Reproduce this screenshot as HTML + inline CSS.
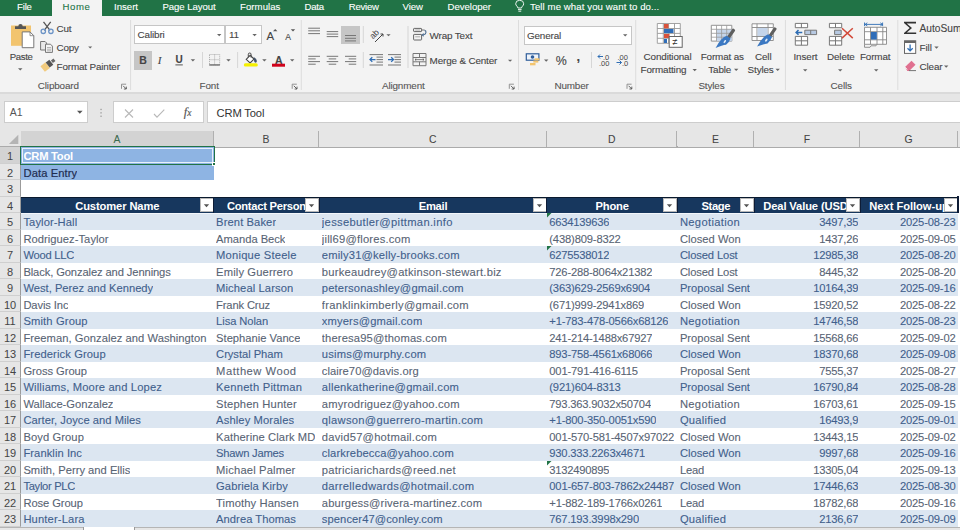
<!DOCTYPE html><html><head><meta charset="utf-8"><style>
*{margin:0;padding:0;box-sizing:border-box}
html,body{width:960px;height:530px;overflow:hidden;background:#fff;font-family:"Liberation Sans",sans-serif}
.a{position:absolute;white-space:nowrap}
#tabs{position:absolute;left:0;top:0;width:960px;height:16px;background:#217346}
.tab{position:absolute;top:0;height:14px;line-height:14px;color:#fff;font-size:9.6px;-webkit-text-stroke:0.1px currentColor}
#rib{position:absolute;left:0;top:16px;width:960px;height:76px;background:#f3f3f3}
#fbar{position:absolute;left:0;top:92px;width:960px;height:39px;background:#e6e6e6;border-top:2px solid #dadada}
.rt{position:absolute;white-space:nowrap;font-size:9.6px;color:#444;-webkit-text-stroke:0.1px currentColor}
.cell{position:absolute;white-space:nowrap;font-size:11.2px;height:16.5px;line-height:19.2px;overflow:hidden}
.rh{position:absolute;left:0;width:21px;height:16.5px;line-height:19px;text-align:center;font-size:11px;color:#444;background:#e6e6e6;border-bottom:1px solid #cfcfcf;border-right:1px solid #9b9b9b}
.ch{position:absolute;top:131.1px;height:16px;line-height:17px;text-align:center;font-size:10.4px;color:#333;background:#e6e6e6;border-right:1px solid #b0b0b0;-webkit-text-stroke:0.05px currentColor}
.fb{position:absolute;width:14px;height:14px;background:#fff;border:1px solid #b8b8b8}
</style></head><body><div id="tabs"><div class="tab" style="left:17px;letter-spacing:-0.18px">File</div><div class="tab" style="left:114px;letter-spacing:-0.002px">Insert</div><div class="tab" style="left:162.5px;letter-spacing:-0.083px">Page Layout</div><div class="tab" style="left:240px;letter-spacing:0.062px">Formulas</div><div class="tab" style="left:304.5px;letter-spacing:-0.257px">Data</div><div class="tab" style="left:348.75px;letter-spacing:-0.246px">Review</div><div class="tab" style="left:402.5px;letter-spacing:-0.077px">View</div><div class="tab" style="left:447.5px;letter-spacing:-0.029px">Developer</div><div class="tab" style="left:530px;letter-spacing:0.099px">Tell me what you want to do...</div><div class="tab" style="left:52px;top:0;width:50px;height:16px;background:#f3f3f3"></div><div class="tab" style="left:62.5px;color:#217346;letter-spacing:0.598px">Home</div><svg class="a" style="left:515px;top:0" width="10" height="13" viewBox="0 0 10 13"><path d="M2.9 8c0-1.6-2.2-2.2-2.2-4.2a4 3.5 0 0 1 8 0c0 2-2.2 2.6-2.2 4.2z M3 9.6h3.6 M3.4 11.2h2.8" fill="none" stroke="#e8f2ec" stroke-width="1"/></svg></div><div id="rib"></div><div class="rt" style="left:9.7px;top:49.9px;height:14px;line-height:14px;font-size:9.9px;letter-spacing:-0.153px;color:#444;letter-spacing:-0.35px;font-size:9.6px">Paste</div><div class="rt" style="left:56.5px;top:22.2px;height:14px;line-height:14px;font-size:9.9px;letter-spacing:-0.156px;color:#444;">Cut</div><div class="rt" style="left:56.5px;top:41.3px;height:14px;line-height:14px;font-size:9.9px;letter-spacing:-0.175px;color:#444;">Copy</div><div class="rt" style="left:56.5px;top:59.8px;height:14px;line-height:14px;font-size:9.9px;letter-spacing:-0.142px;color:#444;">Format Painter</div><div class="rt" style="left:37.8px;top:78.8px;height:14px;line-height:14px;font-size:9.9px;letter-spacing:-0.143px;color:#555;">Clipboard</div><div class="rt" style="left:199.6px;top:78.8px;height:14px;line-height:14px;font-size:9.9px;letter-spacing:-0.15px;color:#555;">Font</div><div class="rt" style="left:382px;top:78.8px;height:14px;line-height:14px;font-size:9.9px;letter-spacing:-0.148px;color:#555;">Alignment</div><div class="rt" style="left:554.5px;top:78.8px;height:14px;line-height:14px;font-size:9.9px;letter-spacing:-0.178px;color:#555;">Number</div><div class="rt" style="left:698.4px;top:78.8px;height:14px;line-height:14px;font-size:9.9px;letter-spacing:-0.136px;color:#555;">Styles</div><div class="rt" style="left:830.6px;top:78.8px;height:14px;line-height:14px;font-size:9.9px;letter-spacing:-0.133px;color:#555;">Cells</div><div class="rt" style="left:429.6px;top:28.500000000000004px;height:14px;line-height:14px;font-size:9.9px;letter-spacing:-0.154px;color:#444;">Wrap Text</div><div class="rt" style="left:429.6px;top:53.8px;height:14px;line-height:14px;font-size:9.9px;letter-spacing:-0.151px;color:#444;">Merge &amp; Center</div><div class="rt" style="left:643.6px;top:49.9px;height:14px;line-height:14px;font-size:9.9px;letter-spacing:-0.136px;color:#444;">Conditional</div><div class="rt" style="left:640.6px;top:63.099999999999994px;height:14px;line-height:14px;font-size:9.9px;letter-spacing:-0.143px;color:#444;">Formatting</div><div class="rt" style="left:700.7px;top:50.099999999999994px;height:14px;line-height:14px;font-size:9.9px;letter-spacing:-0.15px;color:#444;">Format as</div><div class="rt" style="left:708.3px;top:62.7px;height:14px;line-height:14px;font-size:9.9px;letter-spacing:-0.15px;color:#444;">Table</div><div class="rt" style="left:755px;top:50.099999999999994px;height:14px;line-height:14px;font-size:9.9px;letter-spacing:-0.129px;color:#444;">Cell</div><div class="rt" style="left:747.6px;top:62.7px;height:14px;line-height:14px;font-size:9.9px;letter-spacing:-0.136px;color:#444;">Styles</div><div class="rt" style="left:793.5px;top:50.099999999999994px;height:14px;line-height:14px;font-size:9.9px;letter-spacing:-0.125px;color:#444;">Insert</div><div class="rt" style="left:827px;top:50.099999999999994px;height:14px;line-height:14px;font-size:9.9px;letter-spacing:-0.145px;color:#444;">Delete</div><div class="rt" style="left:860px;top:50.099999999999994px;height:14px;line-height:14px;font-size:9.9px;letter-spacing:-0.158px;color:#444;">Format</div><div class="rt" style="left:919.5px;top:21.7px;height:14px;line-height:14px;font-size:10.2px;color:#444;">AutoSum</div><div class="rt" style="left:919.5px;top:41.199999999999996px;height:14px;line-height:14px;font-size:9.9px;letter-spacing:-0.096px;color:#444;">Fill</div><div class="rt" style="left:919.5px;top:60.3px;height:14px;line-height:14px;font-size:9.9px;letter-spacing:-0.143px;color:#444;">Clear</div><div class="a" style="left:134.4px;top:25.4px;width:91px;height:19px;background:#fff;border:1px solid #c6c6c6"></div><div class="a" style="left:224.5px;top:25.4px;width:37px;height:19px;background:#fff;border:1px solid #c6c6c6"></div><div class="rt" style="left:137.5px;top:28.3px;height:14px;line-height:14px;font-size:9.9px;letter-spacing:-0.121px;color:#444;">Calibri</div><div class="rt" style="left:229px;top:28.3px;height:14px;line-height:14px;font-size:9.9px;letter-spacing:-0.167px;color:#444;">11</div><div class="a" style="left:523.5px;top:25.5px;width:108px;height:19px;background:#fff;border:1px solid #c6c6c6"></div><div class="rt" style="left:527px;top:28.500000000000004px;height:14px;line-height:14px;font-size:9.9px;letter-spacing:-0.152px;color:#444;">General</div><div class="a" style="left:134px;top:51.2px;width:18px;height:18.6px;background:#c6c6c6"></div><div class="a" style="left:341.4px;top:26px;width:18.6px;height:18px;background:#c6c6c6"></div><div class="rt" style="left:139.2px;top:53.0px;height:14px;line-height:14px;font-size:10.5px;color:#444;font-weight:bold">B</div><div class="rt" style="left:157.8px;top:53.0px;height:14px;line-height:14px;font-size:11px;color:#444;font-style:italic;font-family:'Liberation Serif',serif">I</div><div class="rt" style="left:175.6px;top:52.6px;height:14px;line-height:14px;font-size:10px;color:#444;font-weight:bold">U</div><div class="rt" style="left:266.4px;top:28.799999999999997px;height:14px;line-height:14px;font-size:11.4px;color:#444;">A</div><div class="rt" style="left:285.3px;top:29.6px;height:14px;line-height:14px;font-size:8.6px;color:#444;">A</div><div class="rt" style="left:275px;top:52.8px;height:14px;line-height:14px;font-size:10.5px;color:#444;font-weight:bold">A</div><div class="rt" style="left:555.8px;top:53.6px;height:14px;line-height:14px;font-size:12.4px;color:#444;">%</div><div class="rt" style="left:576.6px;top:49.8px;height:14px;line-height:14px;font-size:13px;color:#444;font-weight:bold">,</div><svg class="a" style="left:0;top:0" width="960" height="92" viewBox="0 0 960 92"><rect x="130.1" y="20" width="1" height="70" fill="#dcdcdc"/><rect x="300.8" y="20" width="1" height="70" fill="#dcdcdc"/><rect x="518.0" y="20" width="1" height="70" fill="#dcdcdc"/><rect x="635.2" y="20" width="1" height="70" fill="#dcdcdc"/><rect x="784.9" y="20" width="1" height="70" fill="#dcdcdc"/><rect x="897.3" y="20" width="1" height="70" fill="#dcdcdc"/><rect x="202.0" y="52" width="1" height="16" fill="#d6d6d6"/><rect x="237.1" y="52" width="1" height="16" fill="#d6d6d6"/><rect x="362.8" y="26" width="1" height="17" fill="#d6d6d6"/><rect x="362.8" y="52" width="1" height="16" fill="#d6d6d6"/><rect x="407.5" y="26" width="1" height="42" fill="#d6d6d6"/><rect x="591.0" y="52" width="1" height="16" fill="#d6d6d6"/><path d="M121.5 88.8v-4.6h4.6" fill="none" stroke="#888" stroke-width="0.9"/><path d="M123.1 85.8l3.2 3.2m0-2.4v2.4h-2.4" fill="none" stroke="#555" stroke-width="0.9"/><path d="M292.2 88.8v-4.6h4.6" fill="none" stroke="#888" stroke-width="0.9"/><path d="M293.8 85.8l3.2 3.2m0-2.4v2.4h-2.4" fill="none" stroke="#555" stroke-width="0.9"/><path d="M509.3 88.8v-4.6h4.6" fill="none" stroke="#888" stroke-width="0.9"/><path d="M510.90000000000003 85.8l3.2 3.2m0-2.4v2.4h-2.4" fill="none" stroke="#555" stroke-width="0.9"/><path d="M627 88.8v-4.6h4.6" fill="none" stroke="#888" stroke-width="0.9"/><path d="M628.6 85.8l3.2 3.2m0-2.4v2.4h-2.4" fill="none" stroke="#555" stroke-width="0.9"/><path d="M18 68.3h4.5l-2.25 2.25z" fill="#666"/><path d="M88.2 46.4h4.0l-2.0 2.0z" fill="#666"/><path d="M217 34h4.400000000000006l-2.200000000000003 2.200000000000003z" fill="#666"/><path d="M252.4 34h4.400000000000006l-2.200000000000003 2.200000000000003z" fill="#666"/><path d="M190.7 59.3h4.400000000000006l-2.200000000000003 2.200000000000003z" fill="#666"/><path d="M226.3 59.3h4.399999999999977l-2.1999999999999886 2.1999999999999886z" fill="#666"/><path d="M262.2 59.3h4.400000000000034l-2.200000000000017 2.200000000000017z" fill="#666"/><path d="M290 59.3h4.399999999999977l-2.1999999999999886 2.1999999999999886z" fill="#666"/><path d="M386.4 34.2h4.2000000000000455l-2.1000000000000227 2.1000000000000227z" fill="#666"/><path d="M508 59.7h4.2000000000000455l-2.1000000000000227 2.1000000000000227z" fill="#666"/><path d="M623 34.2h4.399999999999977l-2.1999999999999886 2.1999999999999886z" fill="#666"/><path d="M544 59.5h4.399999999999977l-2.1999999999999886 2.1999999999999886z" fill="#666"/><path d="M692.5 69h4.399999999999977l-2.1999999999999886 2.1999999999999886z" fill="#666"/><path d="M734 68.8h4.399999999999977l-2.1999999999999886 2.1999999999999886z" fill="#666"/><path d="M775.5 68.8h4.399999999999977l-2.1999999999999886 2.1999999999999886z" fill="#666"/><path d="M803 69.3h4.399999999999977l-2.1999999999999886 2.1999999999999886z" fill="#666"/><path d="M838 69.3h4.399999999999977l-2.1999999999999886 2.1999999999999886z" fill="#666"/><path d="M874 69.3h4.399999999999977l-2.1999999999999886 2.1999999999999886z" fill="#666"/><path d="M934.3 46.5h4.400000000000091l-2.2000000000000455 2.2000000000000455z" fill="#666"/><path d="M944 65.6h4.399999999999977l-2.1999999999999886 2.1999999999999886z" fill="#666"/><path d="M273 31.2h4.4l-2.2-2.2z" fill="#555"/><path d="M290.8 29.3h4.4l-2.2 2.2z" fill="#555"/><rect x="175.4" y="64.4" width="7.4" height="1" fill="#555"/><rect x="11" y="25.5" width="20" height="20.3" fill="#f2c46e"/><path d="M15 28.9h11v-2.6h-3.3a2.2 2.2 0 0 0 -4.4 0h-3.3z" fill="#555"/><path d="M22.2 31.9h7.8l3.8 3.8v12h-11.6z" fill="#fff" stroke="#777" stroke-width="1"/><path d="M30 31.9v3.8h3.8" fill="none" stroke="#777" stroke-width="0.8"/><path d="M43.5 21.8l6.5 8.5M50.7 21.8l-6.5 8.5" stroke="#555" stroke-width="1.3" fill="none"/><circle cx="43.3" cy="31.3" r="2.2" fill="none" stroke="#6b93c6" stroke-width="1.3"/><circle cx="50.9" cy="31.3" r="2.2" fill="none" stroke="#6b93c6" stroke-width="1.3"/><path d="M40.6 41.5h4.5l1.5 1.5v7h-6z" fill="#e8e8e8" stroke="#777" stroke-width="1"/><path d="M45.5 44.2h5l1.9 1.9v6.3h-6.9z" fill="#f4f4f4" stroke="#777" stroke-width="1"/><path d="M47 47.5h4M47 49.2h4M47 50.8h4" stroke="#999" stroke-width="0.7"/><g transform="translate(48.3,64.6) rotate(-38)"><rect x="-7.2" y="-3.6" width="6.4" height="7.2" fill="#f2cb7e"/><rect x="-0.8" y="-3.2" width="4.6" height="6.4" fill="#555"/><rect x="4.6" y="-1.6" width="3.2" height="3.2" fill="#666"/></g><path d="M209.5 54.5h10.2v10.5h-10.2z M214.6 54.5v10.5 M209.5 59.7h10.2" fill="none" stroke="#999" stroke-width="0.8" stroke-dasharray="1 1"/><rect x="209.3" y="64.4" width="10.6" height="1.1" fill="#555"/><path d="M246.2 59.3L250.2 55.3L254 59.1L250.1 62.9Z" fill="#fff" stroke="#444" stroke-width="1.1"/><path d="M248.3 56.9v-2.5a1.4 1.4 0 0 1 2.8 0v3.2" fill="none" stroke="#444" stroke-width="1"/><path d="M253.6 57.3q3 0.7 3.3 3.6q0 1.8-1.5 1.8q-1.3-0.2-1.3-1.9z" fill="#44546a"/><rect x="243.8" y="63.3" width="14" height="3.2" rx="1.6" fill="#f5f000"/><rect x="272" y="63.7" width="13" height="3" fill="#d0021b"/><rect x="308.2" y="27.7" width="11.8" height="1.0" fill="#777"/><rect x="308.2" y="30.3" width="11.8" height="1.0" fill="#777"/><rect x="308.2" y="33.1" width="11.8" height="1.0" fill="#777"/><rect x="326.7" y="31.1" width="11.5" height="1.0" fill="#777"/><rect x="326.7" y="33.6" width="11.5" height="1.0" fill="#777"/><rect x="326.7" y="36.1" width="11.5" height="1.0" fill="#777"/><rect x="345" y="35.0" width="11" height="1.0" fill="#777"/><rect x="345" y="37.8" width="11" height="1.0" fill="#777"/><rect x="345" y="40.4" width="11" height="1.0" fill="#777"/><rect x="308.2" y="55.8" width="11.8" height="1.0" fill="#777"/><rect x="308.2" y="58.4" width="7.5" height="1.0" fill="#777"/><rect x="308.2" y="61.1" width="11.8" height="1.0" fill="#777"/><rect x="308.2" y="63.7" width="7.5" height="1.0" fill="#777"/><rect x="326.7" y="55.8" width="11.5" height="1.0" fill="#777"/><rect x="328.7" y="58.4" width="7.5" height="1.0" fill="#777"/><rect x="326.7" y="61.1" width="11.5" height="1.0" fill="#777"/><rect x="328.7" y="63.7" width="7.5" height="1.0" fill="#777"/><rect x="345" y="55.8" width="11.2" height="1.0" fill="#777"/><rect x="348.7" y="58.4" width="7.499999999999999" height="1.0" fill="#777"/><rect x="345" y="61.1" width="11.2" height="1.0" fill="#777"/><rect x="348.7" y="63.7" width="7.499999999999999" height="1.0" fill="#777"/><rect x="369.5" y="54.1" width="13.5" height="1.0" fill="#777"/><rect x="376.5" y="56.6" width="6.5" height="1.0" fill="#777"/><rect x="376.5" y="59.1" width="6.5" height="1.0" fill="#777"/><rect x="376.5" y="61.6" width="6.5" height="1.0" fill="#777"/><rect x="369.5" y="64.5" width="13.5" height="1.0" fill="#777"/><path d="M370 59.6h5.5M372.3 57.3l-2.3 2.3 2.3 2.3" stroke="#2e6db4" stroke-width="1.3" fill="none"/><rect x="388" y="54.1" width="13" height="1.0" fill="#777"/><rect x="394.5" y="56.6" width="6.5" height="1.0" fill="#777"/><rect x="394.5" y="59.1" width="6.5" height="1.0" fill="#777"/><rect x="394.5" y="61.6" width="6.5" height="1.0" fill="#777"/><rect x="388" y="64.5" width="13" height="1.0" fill="#777"/><path d="M388 59.6h5.5M391.2 57.3l2.3 2.3-2.3 2.3" stroke="#2e6db4" stroke-width="1.3" fill="none"/><text x="0" y="0" transform="translate(373,39.5) rotate(-45)" font-family="Liberation Sans" font-size="8.5" fill="#444">ab</text><path d="M375 42l8-8M380.5 34h2.5v2.5" stroke="#444" stroke-width="1" fill="none"/><rect x="413.6" y="28.4" width="8" height="3.2" rx="0.6" fill="#f4f4f4" stroke="#666" stroke-width="1"/><rect x="413.6" y="34.4" width="8" height="5.6" rx="0.6" fill="#f4f4f4" stroke="#666" stroke-width="1"/><path d="M415.2 30h5M415.2 36.8h5" stroke="#999" stroke-width="0.8"/><path d="M421.6 30h3" stroke="#777" stroke-width="1"/><path d="M424.6 30.4c2.2 0.6 1.8 3.6 -1.2 4.4" stroke="#4a6a8e" stroke-width="1.1" fill="none"/><path d="M421.3 35.1l2.4-2v3.6z" fill="#4a6a8e"/><path d="M413 53.5h13v12.2h-13z M413 57.5h13 M413 61.8h13 M419.5 53.5v4 M419.5 61.8v3.9" fill="none" stroke="#777" stroke-width="1"/><path d="M415 59.6h9M416.3 58.4l-1.3 1.2 1.3 1.2M422.7 58.4l1.3 1.2-1.3 1.2" stroke="#555" stroke-width="0.7" fill="none"/><rect x="526.3" y="53.8" width="12.6" height="6.4" fill="#eef3fa" stroke="#2e5d9a" stroke-width="1.2"/><circle cx="532.5" cy="57" r="1.8" fill="#2e5d9a"/><rect x="534.5" y="58.3" width="5" height="2" fill="#f2c46e"/><rect x="533.3" y="60.6" width="5" height="2" fill="#f2c46e"/><rect x="530" y="63" width="5.5" height="2.3" fill="#f2c46e"/><text x="603" y="59.5" font-family="Liberation Sans" font-size="7.5" fill="#444">.0</text><text x="599" y="65.5" font-family="Liberation Sans" font-size="7.5" fill="#444">.00</text><path d="M598 56.5h5M600 54.5l-2 2 2 2" stroke="#2e6db4" stroke-width="1" fill="none"/><text x="617.5" y="59.5" font-family="Liberation Sans" font-size="7.5" fill="#444">.00</text><text x="622" y="65.5" font-family="Liberation Sans" font-size="7.5" fill="#444">.0</text><path d="M616.5 62.5h5M619.5 60.5l2 2-2 2" stroke="#2e6db4" stroke-width="1" fill="none"/><path d="M657.3 23.5h23v19.8h-23z M657.3 28.5h23 M657.3 33.4h23 M657.3 38.3h23 M663.3 23.5v19.8 M668.6 23.5v19.8 M674.5 23.5v19.8" fill="#fff" stroke="#999" stroke-width="0.9"/><rect x="664" y="24" width="4.5" height="4.3" fill="#d9523a"/><rect x="664" y="29" width="9.5" height="4" fill="#2f6db8"/><rect x="664" y="34" width="5.5" height="4" fill="#d9523a"/><rect x="664" y="39" width="3" height="4" fill="#2f6db8"/><rect x="669.2" y="36.5" width="13" height="10.8" fill="#fff" stroke="#666" stroke-width="1"/><text x="672.2" y="45.3" font-family="Liberation Sans" font-size="9.5" fill="#333">≠</text><path d="M711.3 25.3h20.5v15.8h-20.5z" fill="#fff" stroke="#888" stroke-width="0.9"/><rect x="716.5" y="29.3" width="15.3" height="11.8" fill="#c5d5ea"/><path d="M711.3 29.3h20.5 M711.3 33.3h20.5 M711.3 37.2h20.5 M716.5 25.3v15.8 M721.6 25.3v15.8 M726.7 25.3v15.8" fill="none" stroke="#999" stroke-width="0.8"/><g transform="translate(727.6,38.6) rotate(-55)"><rect x="1" y="-1.6" width="10.5" height="3.2" rx="1" fill="#5f5f5f"/><path d="M1.8 2.4V-2.4Q-3.5 -6-14.5 -4.5Q-8.5 -0.5 -6 2.3Q-2 3.6 1.8 2.4z" fill="#3b78c2"/><ellipse cx="-4" cy="-0.6" rx="1.8" ry="0.9" fill="#dfeaf6"/></g><path d="M752 23.8h21.3v16.7h-21.3z M752 27.5h21.3 M752 36.5h21.3 M757 23.8v16.7 M768 23.8v16.7" fill="#fff" stroke="#888" stroke-width="0.9"/><rect x="757.5" y="28" width="10" height="8" fill="#c5d5ea"/><g transform="translate(769.1,37.2) rotate(-55)"><rect x="1" y="-1.6" width="10.5" height="3.2" rx="1" fill="#5f5f5f"/><path d="M1.8 2.4V-2.4Q-3.5 -6-14.5 -4.5Q-8.5 -0.5 -6 2.3Q-2 3.6 1.8 2.4z" fill="#3b78c2"/><ellipse cx="-4" cy="-0.6" rx="1.8" ry="0.9" fill="#dfeaf6"/></g><path d="M795.3 23.4h12.3v4.3h-12.3z M801.4 23.4v4.3 M795.3 36.4h12.3v8.8h-12.3z M795.3 40.8h12.3 M801.4 36.4v8.8" fill="#fff" stroke="#777" stroke-width="1"/><path d="M804.8 30.2h11.8v4.4h-11.8z M810.7 30.2v4.4" fill="#b7c9e2" stroke="#777" stroke-width="1"/><path d="M796 32.4h6.3M798.5 30l-2.4 2.4 2.4 2.4" stroke="#2e6db4" stroke-width="1.5" fill="none"/><path d="M829.4 23.4h12.3v4.3h-12.3z M835.5 23.4v4.3 M829.4 36.4h12.3v8.8h-12.3z M829.4 40.8h12.3 M835.5 36.4v8.8" fill="#fff" stroke="#777" stroke-width="1"/><path d="M834.6 30.2h6.6v4.4h-6.6z" fill="#b7c9e2" stroke="#777" stroke-width="1"/><path d="M842 28.3l10.8 9.8M852.8 28.3l-10.8 9.8" stroke="#d24a3a" stroke-width="1.5" fill="none"/><path d="M864.5 22.5v3.6M882.6 22.5v3.6M865 24.4h17M867.3 22.8l-2.2 1.6 2.2 1.6M880.3 22.8l2.2 1.6-2.2 1.6" stroke="#2e6db4" stroke-width="0.9" fill="none"/><path d="M864.5 27.3h22v17h-22z M864.5 31.7h22 M864.5 39.8h22 M870.5 27.3v17 M877 27.3v17 M882.8 27.3v17" fill="#fff" stroke="#888" stroke-width="0.9"/><path d="M864.5 44.3v3h5.5l1-1.5h5l1 -1.5" fill="none" stroke="#888" stroke-width="0.9"/><rect x="871" y="32" width="5.8" height="7.5" fill="#2f6db8"/><path d="M904 21.8h12v1.6h-9.2l5.2 4.5-5.2 4.6h9.4v1.6h-12.2v-1.2l5.7-5-5.7-4.9z" fill="#333"/><rect x="904.5" y="40.8" width="11.2" height="12.6" fill="#fff" stroke="#666" stroke-width="1"/><rect x="904.5" y="40.8" width="11.2" height="2.2" fill="#666"/><path d="M910.1 44.5v6.3M907.5 48.3l2.6 2.6 2.6-2.6" stroke="#2e6db4" stroke-width="1.3" fill="none"/><path d="M905 67l6.5-6.3 4 4-6.3 6.3h-1.8z" fill="#e07090"/><path d="M905 67l2.4 2.4" stroke="#f4f4f4" stroke-width="0.8"/><path d="M909 70.6h7" stroke="#666" stroke-width="0.9"/></svg><div id="fbar"><div class="a" style="left:4.4px;top:7.3px;width:84px;height:22.1px;background:#fff;border:1px solid #cdcdcd"></div><div class="a" style="left:9.8px;top:7.3px;height:22px;line-height:22px;font-size:10.5px;color:#555">A1</div><svg class="a" style="left:0;top:-1px" width="960" height="39" viewBox="0 0 960 39"><path d="M77 17.8h5.6l-2.8 3z" fill="#555"/><rect x="100.4" y="15.8" width="1.3" height="1.3" fill="#9a9a9a"/><rect x="100.4" y="19.2" width="1.3" height="1.3" fill="#9a9a9a"/><rect x="100.4" y="22.6" width="1.3" height="1.3" fill="#9a9a9a"/><path d="M125 16.5l8 8M133 16.5l-8 8" stroke="#b8b8b8" stroke-width="1.1"/><path d="M154 21l3 3.2 7.3-7.5" stroke="#b8b8b8" stroke-width="1.1" fill="none"/></svg><div class="a" style="left:113.4px;top:7.2px;width:90.5px;height:21.9px;background:#fff;border:1px solid #cdcdcd"></div><svg class="a" style="left:0;top:-1px" width="960" height="39" viewBox="0 0 960 39"><path d="M125 16.5l8 8M133 16.5l-8 8" stroke="#b8b8b8" stroke-width="1.1"/><path d="M154 21l3 3.2 7.3-7.5" stroke="#b8b8b8" stroke-width="1.1" fill="none"/></svg><div class="a" style="left:183.8px;top:8px;height:20px;line-height:20px;font-size:12.5px;color:#555;-webkit-text-stroke:0.15px #555;font-family:'Liberation Serif',serif;font-style:italic">f<span style="font-size:9.5px">x</span></div><div class="a" style="left:206.8px;top:7.2px;width:760px;height:21.9px;background:#fff;border:1px solid #cdcdcd"></div><div class="a" style="left:216.5px;top:7.8px;height:21px;line-height:22px;font-size:11.2px;color:#333;letter-spacing:-0.138px">CRM Tool</div></div><div class="a" style="left:0;top:131.1px;width:960px;height:16.3px;background:#e6e6e6;border-bottom:1px solid #ababab"></div><svg class="a" style="left:0;top:131px" width="21" height="16" viewBox="0 0 21 16"><path d="M8.9 13h9.4v-9.2z" fill="#b4b4b4"/></svg><div class="ch" style="left:21px;width:192.7px;color:#3b6a4f;background:#d3d3d3">A</div><div class="ch" style="left:213.7px;width:105.69999999999999px;color:#444;background:#e6e6e6">B</div><div class="ch" style="left:319.4px;width:227.5px;color:#444;background:#e6e6e6">C</div><div class="ch" style="left:546.9px;width:130.60000000000002px;color:#444;background:#e6e6e6">D</div><div class="ch" style="left:677.5px;width:76.89999999999998px;color:#444;background:#e6e6e6">E</div><div class="ch" style="left:754.4px;width:106.0px;color:#444;background:#e6e6e6">F</div><div class="ch" style="left:860.4px;width:97.30000000000007px;color:#444;background:#e6e6e6">G</div><div class="ch" style="left:957.7px;width:42.299999999999955px;color:#444;background:#e6e6e6">H</div><div class="a" style="left:0;top:146.6px;width:960px;height:1px;background:#ababab"></div><div class="a" style="left:21px;top:146.3px;width:192.7px;height:1.5px;background:#217346"></div><div class="rh" style="top:147.1px;background:#d3d3d3;color:#444">1</div><div class="rh" style="top:163.6px;background:#e6e6e6;color:#444">2</div><div class="rh" style="top:180.1px;background:#e6e6e6;color:#444">3</div><div class="rh" style="top:196.6px;background:#e6e6e6;color:#444">4</div><div class="rh" style="top:213.1px;background:#e6e6e6;color:#444">5</div><div class="rh" style="top:229.6px;background:#e6e6e6;color:#444">6</div><div class="rh" style="top:246.1px;background:#e6e6e6;color:#444">7</div><div class="rh" style="top:262.6px;background:#e6e6e6;color:#444">8</div><div class="rh" style="top:279.1px;background:#e6e6e6;color:#444">9</div><div class="rh" style="top:295.6px;background:#e6e6e6;color:#444">10</div><div class="rh" style="top:312.1px;background:#e6e6e6;color:#444">11</div><div class="rh" style="top:328.6px;background:#e6e6e6;color:#444">12</div><div class="rh" style="top:345.1px;background:#e6e6e6;color:#444">13</div><div class="rh" style="top:361.6px;background:#e6e6e6;color:#444">14</div><div class="rh" style="top:378.1px;background:#e6e6e6;color:#444">15</div><div class="rh" style="top:394.6px;background:#e6e6e6;color:#444">16</div><div class="rh" style="top:411.1px;background:#e6e6e6;color:#444">17</div><div class="rh" style="top:427.6px;background:#e6e6e6;color:#444">18</div><div class="rh" style="top:444.1px;background:#e6e6e6;color:#444">19</div><div class="rh" style="top:460.6px;background:#e6e6e6;color:#444">20</div><div class="rh" style="top:477.1px;background:#e6e6e6;color:#444">21</div><div class="rh" style="top:493.6px;background:#e6e6e6;color:#444">22</div><div class="rh" style="top:510.1px;background:#e6e6e6;color:#444">23</div><div class="rh" style="top:526.6px;background:#e6e6e6;color:#444">24</div><div class="a" style="left:19.7px;top:147.1px;width:1.5px;height:16.5px;background:#217346"></div><div class="a" style="left:21px;top:147.1px;width:192.7px;height:33px;background:#8eb4e3"></div><div class="cell" style="left:23.5px;top:147.1px;color:#fff;font-weight:bold;letter-spacing:-0.244px">CRM Tool</div><div class="cell" style="left:23.5px;top:163.6px;color:#1f2d50;letter-spacing:0.086px;-webkit-text-stroke:0.2px #1f2d50">Data Entry</div><div class="a" style="left:20.2px;top:146.1px;width:194.6px;height:18.8px;border:1.5px solid #217346"></div><div class="a" style="left:21.7px;top:147.6px;width:191.2px;height:15.8px;border:1px solid #e8f0fa"></div><div class="a" style="left:211.8px;top:161.9px;width:4.3px;height:4px;background:#217346;border:0.6px solid #fff"></div><div class="a" style="left:21px;top:196.9px;width:937.0px;height:16.8px;background:#17375e;border-top:1.3px solid #0a1a2e;border-bottom:1px solid #0f2440"></div><div class="a" style="left:21px;top:196.6px;width:192.7px;height:16.5px;overflow:hidden"><div class="cell" style="left:0;top:0;width:192.7px;text-align:center;color:#fff;font-weight:bold;letter-spacing:-0.123px;text-indent:-0.123px">Customer Name</div></div><div class="fb" style="left:199.5px;top:197.6px"></div><svg class="a" style="left:199.5px;top:197.6px" width="14" height="14" viewBox="0 0 14 14"><path d="M3.8 6.2h5.4l-2.7 3z" fill="#555"/></svg><div class="a" style="left:213.7px;top:196.6px;width:105.69999999999999px;height:16.5px;overflow:hidden"><div class="cell" style="left:0;top:0;width:105.69999999999999px;text-align:center;color:#fff;font-weight:bold;letter-spacing:-0.265px;text-indent:-0.265px">Contact Person</div></div><div class="a" style="left:213.2px;top:196.6px;width:1px;height:16.5px;background:#0e1c36"></div><div class="fb" style="left:305.2px;top:197.6px"></div><svg class="a" style="left:305.2px;top:197.6px" width="14" height="14" viewBox="0 0 14 14"><path d="M3.8 6.2h5.4l-2.7 3z" fill="#555"/></svg><div class="a" style="left:319.4px;top:196.6px;width:227.5px;height:16.5px;overflow:hidden"><div class="cell" style="left:0;top:0;width:227.5px;text-align:center;color:#fff;font-weight:bold;letter-spacing:-0.238px;text-indent:-0.238px">Email</div></div><div class="a" style="left:318.9px;top:196.6px;width:1px;height:16.5px;background:#0e1c36"></div><div class="fb" style="left:532.6999999999999px;top:197.6px"></div><svg class="a" style="left:532.6999999999999px;top:197.6px" width="14" height="14" viewBox="0 0 14 14"><path d="M3.8 6.2h5.4l-2.7 3z" fill="#555"/></svg><div class="a" style="left:546.9px;top:196.6px;width:130.60000000000002px;height:16.5px;overflow:hidden"><div class="cell" style="left:0;top:0;width:130.60000000000002px;text-align:center;color:#fff;font-weight:bold;letter-spacing:-0.202px;text-indent:-0.202px">Phone</div></div><div class="a" style="left:546.4px;top:196.6px;width:1px;height:16.5px;background:#0e1c36"></div><div class="fb" style="left:663.3px;top:197.6px"></div><svg class="a" style="left:663.3px;top:197.6px" width="14" height="14" viewBox="0 0 14 14"><path d="M3.8 6.2h5.4l-2.7 3z" fill="#555"/></svg><div class="a" style="left:677.5px;top:196.6px;width:76.89999999999998px;height:16.5px;overflow:hidden"><div class="cell" style="left:0;top:0;width:76.89999999999998px;text-align:center;color:#fff;font-weight:bold;letter-spacing:-0.351px;text-indent:-0.351px">Stage</div></div><div class="a" style="left:677.0px;top:196.6px;width:1px;height:16.5px;background:#0e1c36"></div><div class="fb" style="left:740.1999999999999px;top:197.6px"></div><svg class="a" style="left:740.1999999999999px;top:197.6px" width="14" height="14" viewBox="0 0 14 14"><path d="M3.8 6.2h5.4l-2.7 3z" fill="#555"/></svg><div class="a" style="left:754.4px;top:196.6px;width:106.0px;height:16.5px;overflow:hidden"><div class="cell" style="left:0;top:0;width:106.0px;text-align:center;color:#fff;font-weight:bold;letter-spacing:-0.13px;text-indent:-0.13px">Deal Value (USD)</div></div><div class="a" style="left:753.9px;top:196.6px;width:1px;height:16.5px;background:#0e1c36"></div><div class="fb" style="left:846.1999999999999px;top:197.6px"></div><svg class="a" style="left:846.1999999999999px;top:197.6px" width="14" height="14" viewBox="0 0 14 14"><path d="M3.8 6.2h5.4l-2.7 3z" fill="#555"/></svg><div class="a" style="left:860.4px;top:196.6px;width:97.30000000000007px;height:16.5px;overflow:hidden"><div class="cell" style="left:0;top:0;width:97.30000000000007px;text-align:center;color:#fff;font-weight:bold;letter-spacing:-0.046px;text-indent:-0.046px">Next Follow-up</div></div><div class="a" style="left:859.9px;top:196.6px;width:1px;height:16.5px;background:#0e1c36"></div><div class="fb" style="left:943.5px;top:197.6px"></div><svg class="a" style="left:943.5px;top:197.6px" width="14" height="14" viewBox="0 0 14 14"><path d="M3.8 6.2h5.4l-2.7 3z" fill="#555"/></svg><div class="a" style="left:957.2px;top:196.2px;width:1.5px;height:17px;background:#0e1c36"></div><div class="a" style="left:21px;top:213.1px;width:936.7px;height:16.5px;background:#dce6f1"></div><div class="cell" style="left:23.4px;top:213.1px;color:#41608c;letter-spacing:0.089px;-webkit-text-stroke:0.1px #41608c">Taylor-Hall</div><div class="cell" style="left:216.1px;top:213.1px;color:#41608c;letter-spacing:0.1px;-webkit-text-stroke:0.1px #41608c">Brent Baker</div><div class="cell" style="left:321.79999999999995px;top:213.1px;color:#41608c;letter-spacing:0.316px;-webkit-text-stroke:0.1px #41608c">jessebutler@pittman.info</div><div class="cell" style="left:549.3px;top:213.1px;color:#41608c;letter-spacing:-0.231px;-webkit-text-stroke:0.1px #41608c">6634139636</div><div class="cell" style="left:679.9px;top:213.1px;color:#41608c;letter-spacing:0.327px;-webkit-text-stroke:0.1px #41608c">Negotiation</div><div class="cell" style="left:754.4px;top:213.1px;width:103.895px;text-align:right;color:#41608c;letter-spacing:-0.195px;-webkit-text-stroke:0.1px #41608c">3497,35</div><div class="cell" style="left:860.4px;top:213.1px;width:95.16200000000008px;text-align:right;color:#41608c;letter-spacing:-0.162px;-webkit-text-stroke:0.1px #41608c">2025-08-23</div><div class="a" style="left:21px;top:229.6px;width:936.7px;height:16.5px;background:#ffffff"></div><div class="cell" style="left:23.4px;top:229.6px;color:#586474;letter-spacing:0.038px;-webkit-text-stroke:0.1px #586474">Rodriguez-Taylor</div><div class="cell" style="left:216.1px;top:229.6px;color:#586474;letter-spacing:-0.028px;-webkit-text-stroke:0.1px #586474">Amanda Beck</div><div class="cell" style="left:321.79999999999995px;top:229.6px;color:#586474;letter-spacing:0.2px;-webkit-text-stroke:0.1px #586474">jill69@flores.com</div><div class="cell" style="left:549.3px;top:229.6px;color:#586474;letter-spacing:-0.157px;-webkit-text-stroke:0.1px #586474">(438)809-8322</div><div class="cell" style="left:679.9px;top:229.6px;color:#586474;letter-spacing:0.015px;-webkit-text-stroke:0.1px #586474">Closed Won</div><div class="cell" style="left:754.4px;top:229.6px;width:103.895px;text-align:right;color:#586474;letter-spacing:-0.195px;-webkit-text-stroke:0.1px #586474">1437,26</div><div class="cell" style="left:860.4px;top:229.6px;width:95.16200000000008px;text-align:right;color:#586474;letter-spacing:-0.162px;-webkit-text-stroke:0.1px #586474">2025-09-05</div><div class="a" style="left:21px;top:246.1px;width:936.7px;height:16.5px;background:#dce6f1"></div><div class="cell" style="left:23.4px;top:246.1px;color:#41608c;letter-spacing:-0.23px;-webkit-text-stroke:0.1px #41608c">Wood LLC</div><div class="cell" style="left:216.1px;top:246.1px;color:#41608c;letter-spacing:0.203px;-webkit-text-stroke:0.1px #41608c">Monique Steele</div><div class="cell" style="left:321.79999999999995px;top:246.1px;color:#41608c;letter-spacing:0.171px;-webkit-text-stroke:0.1px #41608c">emily31@kelly-brooks.com</div><div class="cell" style="left:549.3px;top:246.1px;color:#41608c;letter-spacing:-0.231px;-webkit-text-stroke:0.1px #41608c">6275538012</div><div class="cell" style="left:679.9px;top:246.1px;color:#41608c;letter-spacing:-0.124px;-webkit-text-stroke:0.1px #41608c">Closed Lost</div><div class="cell" style="left:754.4px;top:246.1px;width:103.9px;text-align:right;color:#41608c;letter-spacing:-0.2px;-webkit-text-stroke:0.1px #41608c">12985,38</div><div class="cell" style="left:860.4px;top:246.1px;width:95.16200000000008px;text-align:right;color:#41608c;letter-spacing:-0.162px;-webkit-text-stroke:0.1px #41608c">2025-08-20</div><div class="a" style="left:21px;top:262.6px;width:936.7px;height:16.5px;background:#ffffff"></div><div class="cell" style="left:23.4px;top:262.6px;color:#586474;letter-spacing:-0.114px;-webkit-text-stroke:0.1px #586474">Black, Gonzalez and Jennings</div><div class="cell" style="left:216.1px;top:262.6px;color:#586474;letter-spacing:0.134px;-webkit-text-stroke:0.1px #586474">Emily Guerrero</div><div class="cell" style="left:321.79999999999995px;top:262.6px;color:#586474;letter-spacing:0.234px;-webkit-text-stroke:0.1px #586474">burkeaudrey@atkinson-stewart.biz</div><div class="cell" style="left:549.3px;top:262.6px;color:#586474;letter-spacing:-0.189px;-webkit-text-stroke:0.1px #586474">726-288-8064x21382</div><div class="cell" style="left:679.9px;top:262.6px;color:#586474;letter-spacing:-0.124px;-webkit-text-stroke:0.1px #586474">Closed Lost</div><div class="cell" style="left:754.4px;top:262.6px;width:103.895px;text-align:right;color:#586474;letter-spacing:-0.195px;-webkit-text-stroke:0.1px #586474">8445,32</div><div class="cell" style="left:860.4px;top:262.6px;width:95.16200000000008px;text-align:right;color:#586474;letter-spacing:-0.162px;-webkit-text-stroke:0.1px #586474">2025-08-20</div><div class="a" style="left:21px;top:279.1px;width:936.7px;height:16.5px;background:#dce6f1"></div><div class="cell" style="left:23.4px;top:279.1px;color:#41608c;letter-spacing:0.001px;-webkit-text-stroke:0.1px #41608c">West, Perez and Kennedy</div><div class="cell" style="left:216.1px;top:279.1px;color:#41608c;letter-spacing:0.094px;-webkit-text-stroke:0.1px #41608c">Micheal Larson</div><div class="cell" style="left:321.79999999999995px;top:279.1px;color:#41608c;letter-spacing:0.157px;-webkit-text-stroke:0.1px #41608c">petersonashley@gmail.com</div><div class="cell" style="left:549.3px;top:279.1px;color:#41608c;letter-spacing:-0.174px;-webkit-text-stroke:0.1px #41608c">(363)629-2569x6904</div><div class="cell" style="left:679.9px;top:279.1px;color:#41608c;letter-spacing:-0.017px;-webkit-text-stroke:0.1px #41608c">Proposal Sent</div><div class="cell" style="left:754.4px;top:279.1px;width:103.9px;text-align:right;color:#41608c;letter-spacing:-0.2px;-webkit-text-stroke:0.1px #41608c">10164,39</div><div class="cell" style="left:860.4px;top:279.1px;width:95.16200000000008px;text-align:right;color:#41608c;letter-spacing:-0.162px;-webkit-text-stroke:0.1px #41608c">2025-09-16</div><div class="a" style="left:21px;top:295.6px;width:936.7px;height:16.5px;background:#ffffff"></div><div class="cell" style="left:23.4px;top:295.6px;color:#586474;letter-spacing:-0.108px;-webkit-text-stroke:0.1px #586474">Davis Inc</div><div class="cell" style="left:216.1px;top:295.6px;color:#586474;letter-spacing:-0.148px;-webkit-text-stroke:0.1px #586474">Frank Cruz</div><div class="cell" style="left:321.79999999999995px;top:295.6px;color:#586474;letter-spacing:0.273px;-webkit-text-stroke:0.1px #586474">franklinkimberly@gmail.com</div><div class="cell" style="left:549.3px;top:295.6px;color:#586474;letter-spacing:-0.171px;-webkit-text-stroke:0.1px #586474">(671)999-2941x869</div><div class="cell" style="left:679.9px;top:295.6px;color:#586474;letter-spacing:0.015px;-webkit-text-stroke:0.1px #586474">Closed Won</div><div class="cell" style="left:754.4px;top:295.6px;width:103.9px;text-align:right;color:#586474;letter-spacing:-0.2px;-webkit-text-stroke:0.1px #586474">15920,52</div><div class="cell" style="left:860.4px;top:295.6px;width:95.16200000000008px;text-align:right;color:#586474;letter-spacing:-0.162px;-webkit-text-stroke:0.1px #586474">2025-08-22</div><div class="a" style="left:21px;top:312.1px;width:936.7px;height:16.5px;background:#dce6f1"></div><div class="cell" style="left:23.4px;top:312.1px;color:#41608c;letter-spacing:0.14px;-webkit-text-stroke:0.1px #41608c">Smith Group</div><div class="cell" style="left:216.1px;top:312.1px;color:#41608c;letter-spacing:-0.08px;-webkit-text-stroke:0.1px #41608c">Lisa Nolan</div><div class="cell" style="left:321.79999999999995px;top:312.1px;color:#41608c;letter-spacing:0.139px;-webkit-text-stroke:0.1px #41608c">xmyers@gmail.com</div><div class="cell" style="left:549.3px;top:312.1px;color:#41608c;letter-spacing:-0.182px;-webkit-text-stroke:0.1px #41608c">+1-783-478-0566x68126</div><div class="cell" style="left:679.9px;top:312.1px;color:#41608c;letter-spacing:0.327px;-webkit-text-stroke:0.1px #41608c">Negotiation</div><div class="cell" style="left:754.4px;top:312.1px;width:103.9px;text-align:right;color:#41608c;letter-spacing:-0.2px;-webkit-text-stroke:0.1px #41608c">14746,58</div><div class="cell" style="left:860.4px;top:312.1px;width:95.16200000000008px;text-align:right;color:#41608c;letter-spacing:-0.162px;-webkit-text-stroke:0.1px #41608c">2025-08-23</div><div class="a" style="left:21px;top:328.6px;width:936.7px;height:16.5px;background:#ffffff"></div><div class="cell" style="left:23.4px;top:328.6px;color:#586474;letter-spacing:0.042px;-webkit-text-stroke:0.1px #586474">Freeman, Gonzalez and Washington</div><div class="cell" style="left:216.1px;top:328.6px;color:#586474;letter-spacing:-0.004px;-webkit-text-stroke:0.1px #586474">Stephanie Vance</div><div class="cell" style="left:321.79999999999995px;top:328.6px;color:#586474;letter-spacing:0.155px;-webkit-text-stroke:0.1px #586474">theresa95@thomas.com</div><div class="cell" style="left:549.3px;top:328.6px;color:#586474;letter-spacing:-0.189px;-webkit-text-stroke:0.1px #586474">241-214-1488x67927</div><div class="cell" style="left:679.9px;top:328.6px;color:#586474;letter-spacing:-0.017px;-webkit-text-stroke:0.1px #586474">Proposal Sent</div><div class="cell" style="left:754.4px;top:328.6px;width:103.9px;text-align:right;color:#586474;letter-spacing:-0.2px;-webkit-text-stroke:0.1px #586474">15568,66</div><div class="cell" style="left:860.4px;top:328.6px;width:95.16200000000008px;text-align:right;color:#586474;letter-spacing:-0.162px;-webkit-text-stroke:0.1px #586474">2025-09-02</div><div class="a" style="left:21px;top:345.1px;width:936.7px;height:16.5px;background:#dce6f1"></div><div class="cell" style="left:23.4px;top:345.1px;color:#41608c;letter-spacing:0.101px;-webkit-text-stroke:0.1px #41608c">Frederick Group</div><div class="cell" style="left:216.1px;top:345.1px;color:#41608c;letter-spacing:-0.043px;-webkit-text-stroke:0.1px #41608c">Crystal Pham</div><div class="cell" style="left:321.79999999999995px;top:345.1px;color:#41608c;letter-spacing:0.205px;-webkit-text-stroke:0.1px #41608c">usims@murphy.com</div><div class="cell" style="left:549.3px;top:345.1px;color:#41608c;letter-spacing:-0.189px;-webkit-text-stroke:0.1px #41608c">893-758-4561x68066</div><div class="cell" style="left:679.9px;top:345.1px;color:#41608c;letter-spacing:0.015px;-webkit-text-stroke:0.1px #41608c">Closed Won</div><div class="cell" style="left:754.4px;top:345.1px;width:103.9px;text-align:right;color:#41608c;letter-spacing:-0.2px;-webkit-text-stroke:0.1px #41608c">18370,68</div><div class="cell" style="left:860.4px;top:345.1px;width:95.16200000000008px;text-align:right;color:#41608c;letter-spacing:-0.162px;-webkit-text-stroke:0.1px #41608c">2025-09-08</div><div class="a" style="left:21px;top:361.6px;width:936.7px;height:16.5px;background:#ffffff"></div><div class="cell" style="left:23.4px;top:361.6px;color:#586474;letter-spacing:-0.041px;-webkit-text-stroke:0.1px #586474">Gross Group</div><div class="cell" style="left:216.1px;top:361.6px;color:#586474;letter-spacing:0.508px;-webkit-text-stroke:0.1px #586474">Matthew Wood</div><div class="cell" style="left:321.79999999999995px;top:361.6px;color:#586474;letter-spacing:0.056px;-webkit-text-stroke:0.1px #586474">claire70@davis.org</div><div class="cell" style="left:549.3px;top:361.6px;color:#586474;letter-spacing:-0.167px;-webkit-text-stroke:0.1px #586474">001-791-416-6115</div><div class="cell" style="left:679.9px;top:361.6px;color:#586474;letter-spacing:-0.017px;-webkit-text-stroke:0.1px #586474">Proposal Sent</div><div class="cell" style="left:754.4px;top:361.6px;width:103.895px;text-align:right;color:#586474;letter-spacing:-0.195px;-webkit-text-stroke:0.1px #586474">7555,37</div><div class="cell" style="left:860.4px;top:361.6px;width:95.16200000000008px;text-align:right;color:#586474;letter-spacing:-0.162px;-webkit-text-stroke:0.1px #586474">2025-08-27</div><div class="a" style="left:21px;top:378.1px;width:936.7px;height:16.5px;background:#dce6f1"></div><div class="cell" style="left:23.4px;top:378.1px;color:#41608c;letter-spacing:0.147px;-webkit-text-stroke:0.1px #41608c">Williams, Moore and Lopez</div><div class="cell" style="left:216.1px;top:378.1px;color:#41608c;letter-spacing:0.228px;-webkit-text-stroke:0.1px #41608c">Kenneth Pittman</div><div class="cell" style="left:321.79999999999995px;top:378.1px;color:#41608c;letter-spacing:0.223px;-webkit-text-stroke:0.1px #41608c">allenkatherine@gmail.com</div><div class="cell" style="left:549.3px;top:378.1px;color:#41608c;letter-spacing:-0.157px;-webkit-text-stroke:0.1px #41608c">(921)604-8313</div><div class="cell" style="left:679.9px;top:378.1px;color:#41608c;letter-spacing:-0.017px;-webkit-text-stroke:0.1px #41608c">Proposal Sent</div><div class="cell" style="left:754.4px;top:378.1px;width:103.9px;text-align:right;color:#41608c;letter-spacing:-0.2px;-webkit-text-stroke:0.1px #41608c">16790,84</div><div class="cell" style="left:860.4px;top:378.1px;width:95.16200000000008px;text-align:right;color:#41608c;letter-spacing:-0.162px;-webkit-text-stroke:0.1px #41608c">2025-08-28</div><div class="a" style="left:21px;top:394.6px;width:936.7px;height:16.5px;background:#ffffff"></div><div class="cell" style="left:23.4px;top:394.6px;color:#586474;letter-spacing:-0.022px;-webkit-text-stroke:0.1px #586474">Wallace-Gonzalez</div><div class="cell" style="left:216.1px;top:394.6px;color:#586474;letter-spacing:0.175px;-webkit-text-stroke:0.1px #586474">Stephen Hunter</div><div class="cell" style="left:321.79999999999995px;top:394.6px;color:#586474;letter-spacing:0.187px;-webkit-text-stroke:0.1px #586474">amyrodriguez@yahoo.com</div><div class="cell" style="left:549.3px;top:394.6px;color:#586474;letter-spacing:-0.195px;-webkit-text-stroke:0.1px #586474">793.363.9032x50704</div><div class="cell" style="left:679.9px;top:394.6px;color:#586474;letter-spacing:0.327px;-webkit-text-stroke:0.1px #586474">Negotiation</div><div class="cell" style="left:754.4px;top:394.6px;width:103.9px;text-align:right;color:#586474;letter-spacing:-0.2px;-webkit-text-stroke:0.1px #586474">16703,61</div><div class="cell" style="left:860.4px;top:394.6px;width:95.16200000000008px;text-align:right;color:#586474;letter-spacing:-0.162px;-webkit-text-stroke:0.1px #586474">2025-09-15</div><div class="a" style="left:21px;top:411.1px;width:936.7px;height:16.5px;background:#dce6f1"></div><div class="cell" style="left:23.4px;top:411.1px;color:#41608c;letter-spacing:0.026px;-webkit-text-stroke:0.1px #41608c">Carter, Joyce and Miles</div><div class="cell" style="left:216.1px;top:411.1px;color:#41608c;letter-spacing:0.115px;-webkit-text-stroke:0.1px #41608c">Ashley Morales</div><div class="cell" style="left:321.79999999999995px;top:411.1px;color:#41608c;letter-spacing:0.284px;-webkit-text-stroke:0.1px #41608c">qlawson@guerrero-martin.com</div><div class="cell" style="left:549.3px;top:411.1px;color:#41608c;letter-spacing:-0.176px;-webkit-text-stroke:0.1px #41608c">+1-800-350-0051x590</div><div class="cell" style="left:679.9px;top:411.1px;color:#41608c;letter-spacing:0.239px;-webkit-text-stroke:0.1px #41608c">Qualified</div><div class="cell" style="left:754.4px;top:411.1px;width:103.895px;text-align:right;color:#41608c;letter-spacing:-0.195px;-webkit-text-stroke:0.1px #41608c">16493,9</div><div class="cell" style="left:860.4px;top:411.1px;width:95.16200000000008px;text-align:right;color:#41608c;letter-spacing:-0.162px;-webkit-text-stroke:0.1px #41608c">2025-09-01</div><div class="a" style="left:21px;top:427.6px;width:936.7px;height:16.5px;background:#ffffff"></div><div class="cell" style="left:23.4px;top:427.6px;color:#586474;letter-spacing:0.089px;-webkit-text-stroke:0.1px #586474">Boyd Group</div><div class="cell" style="left:216.1px;top:427.6px;color:#586474;letter-spacing:0.096px;-webkit-text-stroke:0.1px #586474">Katherine Clark MD</div><div class="cell" style="left:321.79999999999995px;top:427.6px;color:#586474;letter-spacing:0.227px;-webkit-text-stroke:0.1px #586474">david57@hotmail.com</div><div class="cell" style="left:549.3px;top:427.6px;color:#586474;letter-spacing:-0.181px;-webkit-text-stroke:0.1px #586474">001-570-581-4507x97022</div><div class="cell" style="left:679.9px;top:427.6px;color:#586474;letter-spacing:0.015px;-webkit-text-stroke:0.1px #586474">Closed Won</div><div class="cell" style="left:754.4px;top:427.6px;width:103.9px;text-align:right;color:#586474;letter-spacing:-0.2px;-webkit-text-stroke:0.1px #586474">13443,15</div><div class="cell" style="left:860.4px;top:427.6px;width:95.16200000000008px;text-align:right;color:#586474;letter-spacing:-0.162px;-webkit-text-stroke:0.1px #586474">2025-09-02</div><div class="a" style="left:21px;top:444.1px;width:936.7px;height:16.5px;background:#dce6f1"></div><div class="cell" style="left:23.4px;top:444.1px;color:#41608c;letter-spacing:0.068px;-webkit-text-stroke:0.1px #41608c">Franklin Inc</div><div class="cell" style="left:216.1px;top:444.1px;color:#41608c;letter-spacing:-0.216px;-webkit-text-stroke:0.1px #41608c">Shawn James</div><div class="cell" style="left:321.79999999999995px;top:444.1px;color:#41608c;letter-spacing:0.117px;-webkit-text-stroke:0.1px #41608c">clarkrebecca@yahoo.com</div><div class="cell" style="left:549.3px;top:444.1px;color:#41608c;letter-spacing:-0.193px;-webkit-text-stroke:0.1px #41608c">930.333.2263x4671</div><div class="cell" style="left:679.9px;top:444.1px;color:#41608c;letter-spacing:0.015px;-webkit-text-stroke:0.1px #41608c">Closed Won</div><div class="cell" style="left:754.4px;top:444.1px;width:103.895px;text-align:right;color:#41608c;letter-spacing:-0.195px;-webkit-text-stroke:0.1px #41608c">9997,68</div><div class="cell" style="left:860.4px;top:444.1px;width:95.16200000000008px;text-align:right;color:#41608c;letter-spacing:-0.162px;-webkit-text-stroke:0.1px #41608c">2025-09-16</div><div class="a" style="left:21px;top:460.6px;width:936.7px;height:16.5px;background:#ffffff"></div><div class="cell" style="left:23.4px;top:460.6px;color:#586474;letter-spacing:0.004px;-webkit-text-stroke:0.1px #586474">Smith, Perry and Ellis</div><div class="cell" style="left:216.1px;top:460.6px;color:#586474;letter-spacing:0.166px;-webkit-text-stroke:0.1px #586474">Michael Palmer</div><div class="cell" style="left:321.79999999999995px;top:460.6px;color:#586474;letter-spacing:0.232px;-webkit-text-stroke:0.1px #586474">patriciarichards@reed.net</div><div class="cell" style="left:549.3px;top:460.6px;color:#586474;letter-spacing:-0.231px;-webkit-text-stroke:0.1px #586474">3132490895</div><div class="cell" style="left:679.9px;top:460.6px;color:#586474;letter-spacing:-0.197px;-webkit-text-stroke:0.1px #586474">Lead</div><div class="cell" style="left:754.4px;top:460.6px;width:103.9px;text-align:right;color:#586474;letter-spacing:-0.2px;-webkit-text-stroke:0.1px #586474">13305,04</div><div class="cell" style="left:860.4px;top:460.6px;width:95.16200000000008px;text-align:right;color:#586474;letter-spacing:-0.162px;-webkit-text-stroke:0.1px #586474">2025-09-13</div><div class="a" style="left:21px;top:477.1px;width:936.7px;height:16.5px;background:#dce6f1"></div><div class="cell" style="left:23.4px;top:477.1px;color:#41608c;letter-spacing:-0.305px;-webkit-text-stroke:0.1px #41608c">Taylor PLC</div><div class="cell" style="left:216.1px;top:477.1px;color:#41608c;letter-spacing:0.06px;-webkit-text-stroke:0.1px #41608c">Gabriela Kirby</div><div class="cell" style="left:321.79999999999995px;top:477.1px;color:#41608c;letter-spacing:0.285px;-webkit-text-stroke:0.1px #41608c">darrelledwards@hotmail.com</div><div class="cell" style="left:549.3px;top:477.1px;color:#41608c;letter-spacing:-0.181px;-webkit-text-stroke:0.1px #41608c">001-657-803-7862x24487</div><div class="cell" style="left:679.9px;top:477.1px;color:#41608c;letter-spacing:0.015px;-webkit-text-stroke:0.1px #41608c">Closed Won</div><div class="cell" style="left:754.4px;top:477.1px;width:103.9px;text-align:right;color:#41608c;letter-spacing:-0.2px;-webkit-text-stroke:0.1px #41608c">17446,63</div><div class="cell" style="left:860.4px;top:477.1px;width:95.16200000000008px;text-align:right;color:#41608c;letter-spacing:-0.162px;-webkit-text-stroke:0.1px #41608c">2025-08-30</div><div class="a" style="left:21px;top:493.6px;width:936.7px;height:16.5px;background:#ffffff"></div><div class="cell" style="left:23.4px;top:493.6px;color:#586474;letter-spacing:-0.087px;-webkit-text-stroke:0.1px #586474">Rose Group</div><div class="cell" style="left:216.1px;top:493.6px;color:#586474;letter-spacing:0.113px;-webkit-text-stroke:0.1px #586474">Timothy Hansen</div><div class="cell" style="left:321.79999999999995px;top:493.6px;color:#586474;letter-spacing:0.149px;-webkit-text-stroke:0.1px #586474">aburgess@rivera-martinez.com</div><div class="cell" style="left:549.3px;top:493.6px;color:#586474;letter-spacing:-0.179px;-webkit-text-stroke:0.1px #586474">+1-882-189-1766x0261</div><div class="cell" style="left:679.9px;top:493.6px;color:#586474;letter-spacing:-0.197px;-webkit-text-stroke:0.1px #586474">Lead</div><div class="cell" style="left:754.4px;top:493.6px;width:103.9px;text-align:right;color:#586474;letter-spacing:-0.2px;-webkit-text-stroke:0.1px #586474">18782,68</div><div class="cell" style="left:860.4px;top:493.6px;width:95.16200000000008px;text-align:right;color:#586474;letter-spacing:-0.162px;-webkit-text-stroke:0.1px #586474">2025-09-16</div><div class="a" style="left:21px;top:510.1px;width:936.7px;height:16.5px;background:#dce6f1"></div><div class="cell" style="left:23.4px;top:510.1px;color:#41608c;letter-spacing:0.144px;-webkit-text-stroke:0.1px #41608c">Hunter-Lara</div><div class="cell" style="left:216.1px;top:510.1px;color:#41608c;letter-spacing:0.039px;-webkit-text-stroke:0.1px #41608c">Andrea Thomas</div><div class="cell" style="left:321.79999999999995px;top:510.1px;color:#41608c;letter-spacing:0.08px;-webkit-text-stroke:0.1px #41608c">spencer47@conley.com</div><div class="cell" style="left:549.3px;top:510.1px;color:#41608c;letter-spacing:-0.191px;-webkit-text-stroke:0.1px #41608c">767.193.3998x290</div><div class="cell" style="left:679.9px;top:510.1px;color:#41608c;letter-spacing:0.239px;-webkit-text-stroke:0.1px #41608c">Qualified</div><div class="cell" style="left:754.4px;top:510.1px;width:103.895px;text-align:right;color:#41608c;letter-spacing:-0.195px;-webkit-text-stroke:0.1px #41608c">2136,67</div><div class="cell" style="left:860.4px;top:510.1px;width:95.16200000000008px;text-align:right;color:#41608c;letter-spacing:-0.162px;-webkit-text-stroke:0.1px #41608c">2025-09-09</div><div class="a" style="left:21px;top:213.2px;width:936.7px;height:1px;background:#f2f6fb"></div><svg class="a" style="left:546.9px;top:213.1px" width="6" height="6" viewBox="0 0 6 6"><path d="M0 0h4.5L0 4.5z" fill="#217346"/></svg><svg class="a" style="left:546.9px;top:246.1px" width="6" height="6" viewBox="0 0 6 6"><path d="M0 0h4.5L0 4.5z" fill="#217346"/></svg><svg class="a" style="left:546.9px;top:460.6px" width="6" height="6" viewBox="0 0 6 6"><path d="M0 0h4.5L0 4.5z" fill="#217346"/></svg><div class="a" style="left:0;top:526.7px;width:960px;height:4px;background:#e6e6e6;border-top:1px solid #b5b5b5"></div><div class="a" style="left:83.4px;top:527px;width:52px;height:4px;background:#fff;border-left:1px solid #9a9a9a;border-right:1px solid #9a9a9a"></div></body></html>
